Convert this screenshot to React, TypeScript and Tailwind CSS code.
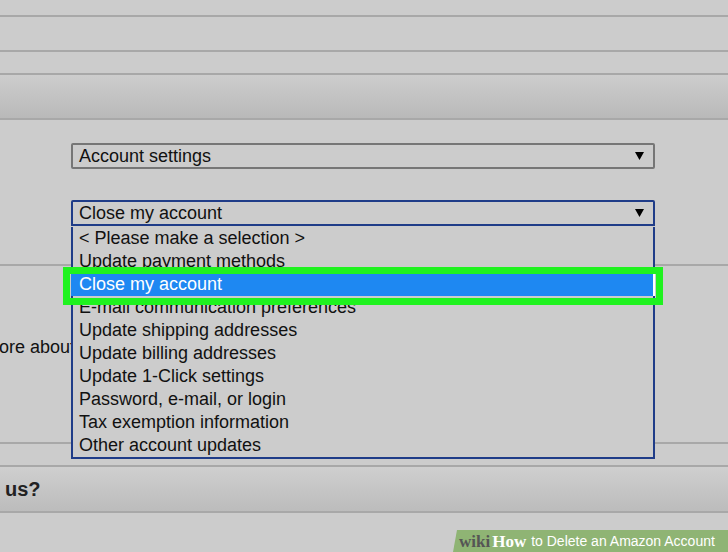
import React from "react"

const options = [
  "< Please make a selection >",
  "Update payment methods",
  "Close my account",
  "E-mail communication preferences",
  "Update shipping addresses",
  "Update billing addresses",
  "Update 1-Click settings",
  "Password, e-mail, or login",
  "Tax exemption information",
  "Other account updates",
]

function Arrow() {
  return (
    <svg width="9" height="8" viewBox="0 0 9 8" className="shrink-0">
      <polygon points="0,0 9,0 4.5,8" fill="#000" />
    </svg>
  )
}

function Line() {
  return <div className="h-[2px] bg-[#a8a8a8]" />
}

export default function App() {
  const selected = "Close my account"

  return (
    <div
      className="relative h-[552px] w-full overflow-hidden bg-[#cccccc] text-[#111]"
      style={{ fontFamily: '"Liberation Sans", Arial, sans-serif' }}
    >
      <div className="h-[15px]" />
      <Line />
      <div className="h-[33px]" />
      <Line />
      <div className="h-[21px]" />
      <Line />
      <div className="h-[43px] bg-gradient-to-b from-[#cdcdcd] to-[#b9b9b9]" />
      <Line />

      {/* account form */}
      <div className="relative z-10 h-[144px] pl-[71px] pt-[23px]">
        <div className="flex h-[26px] w-[584px] items-center justify-between rounded-[2px] border-2 border-[#767676] pl-[6px] pr-[9px] text-[18px] leading-none">
          <span>Account settings</span>
          <Arrow />
        </div>

        <div className="relative mt-[31px] w-[584px]">
          <div className="flex h-[26px] items-center justify-between rounded-t-[2px] border-2 border-[#1f3c88] pl-[6px] pr-[9px] text-[18px] leading-none">
            <span>{selected}</span>
            <Arrow />
          </div>

          {/* open listbox */}
          <ul className="absolute left-0 top-full w-full border-b-2 border-[#1f3c88] bg-[#cccccc] pt-px text-[18px] leading-[23px]">
            {options.map((o) =>
              o === selected ? (
                <li
                  key={o}
                  className="h-[23px] border-x-2 border-l-[#1e88f2] border-r-white bg-[#1e88f2] pl-[6px] text-white"
                >
                  {o}
                </li>
              ) : (
                <li key={o} className="h-[23px] border-x-2 border-[#1f3c88] pl-[6px]">
                  {o}
                </li>
              )
            )}
          </ul>

          {/* green highlight frame */}
          <div className="absolute left-[-8px] top-[67px] h-[38px] w-[600px] border-[7px] border-[#1ff21f]" />
        </div>
      </div>
      <Line />

      <div className="h-[176px] pt-[70px] text-[18px] leading-[23px]">
        <span className="ml-[-1px]">ore about</span>
      </div>
      <Line />
      <div className="h-[21px]" />
      <Line />
      <div className="flex h-[44px] items-center bg-gradient-to-b from-[#cfcfcf] to-[#bcbcbc] pl-[5px] text-[20px] font-bold text-[#222]">
        us?
      </div>
      <Line />

      {/* wikiHow caption */}
      <div className="flex h-[39px] items-end justify-end">
        <div
          className="flex h-[22px] w-[275px] items-center bg-[#8fb474] pl-[6px]"
          style={{ clipPath: "polygon(4px 0, 100% 0, 100% 100%, 0 100%)" }}
        >
          <span
            className="text-[17px] font-bold leading-none text-[#555]"
            style={{ fontFamily: '"Liberation Serif", serif' }}
          >
            wiki
          </span>
          <span
            className="ml-[2px] text-[17px] font-bold leading-none text-white"
            style={{ fontFamily: '"Liberation Serif", serif' }}
          >
            How
          </span>
          <span className="ml-[5px] text-[14px] leading-none text-white">
            to Delete an Amazon Account
          </span>
        </div>
      </div>
    </div>
  )
}
